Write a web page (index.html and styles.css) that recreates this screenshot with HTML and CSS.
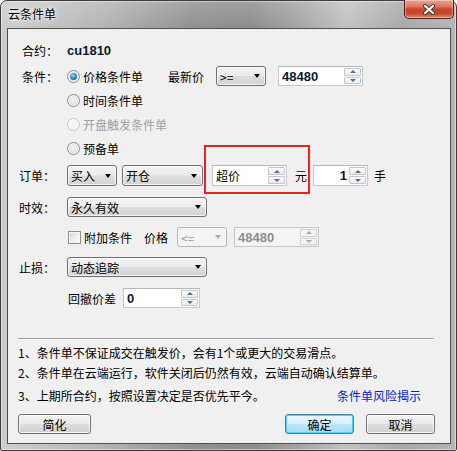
FILE: index.html
```html
<!DOCTYPE html>
<html lang="zh-CN">
<head>
<meta charset="utf-8">
<title>云条件单</title>
<link rel="stylesheet" href="styles.css">
</head>
<body>
<div class="window">
  <div class="titlebar">
    <span class="title">云条件单</span>
    <div class="close">
      <svg width="14" height="11" viewBox="0 0 14 11">
        <path d="M3 2 L11 9 M11 2 L3 9" stroke="#3b3b3b" stroke-width="4.2" stroke-linecap="round"/>
        <path d="M3 2 L11 9 M11 2 L3 9" stroke="#ffffff" stroke-width="2.2" stroke-linecap="round"/>
      </svg>
    </div>
  </div>
  <div class="client">
    <div class="row r1">
      <span class="lab lab-in">合约：</span>
      <span class="contract">cu1810</span>
    </div>
    <div class="row r2">
      <span class="lab lab-in">条件：</span>
      <span class="radio checked"><i class="rb"></i>价格条件单</span>
      <span class="latest">最新价</span>
      <div class="select w50"><span>&gt;=</span><i class="arrow"></i></div>
      <div class="spin w85 ml12"><span class="val num">48480</span><div class="btns"><b><i class="up"></i></b><b><i class="down"></i></b></div></div>
    </div>
    <div class="row r3">
      <span class="lab"></span>
      <span class="radio"><i class="rb"></i>时间条件单</span>
    </div>
    <div class="row r3">
      <span class="lab"></span>
      <span class="radio disabled"><i class="rb"></i>开盘触发条件单</span>
    </div>
    <div class="row r3">
      <span class="lab"></span>
      <span class="radio"><i class="rb"></i>预备单</span>
    </div>
    <div class="row r6">
      <span class="lab">订单：</span>
      <div class="select w50"><span>买入</span><i class="arrow"></i></div>
      <div class="select w81 ml5"><span>开仓</span><i class="arrow"></i></div>
      <div class="spin w75 ml9"><span class="val">超价</span><div class="btns"><b><i class="up"></i></b><b><i class="down"></i></b></div></div>
      <span class="unit-yuan">元</span>
      <div class="spin w55 ml6"><span class="val num right">1</span><div class="btns"><b><i class="up"></i></b><b><i class="down"></i></b></div></div>
      <span class="unit-shou">手</span>
    </div>
    <div class="row r7">
      <span class="lab">时效：</span>
      <div class="select w140"><span>永久有效</span><i class="arrow"></i></div>
    </div>
    <div class="row r8">
      <span class="lab"></span>
      <span class="check"><i class="cb"></i>附加条件</span>
      <span class="price-lab">价格</span>
      <div class="select w50 disabled"><span>&lt;=</span><i class="arrow"></i></div>
      <div class="spin w85 ml7 disabled"><span class="val num">48480</span><div class="btns"><b><i class="up"></i></b><b><i class="down"></i></b></div></div>
    </div>
    <div class="row r9">
      <span class="lab">止损：</span>
      <div class="select w140"><span>动态追踪</span><i class="arrow"></i></div>
    </div>
    <div class="row r10">
      <span class="lab"></span>
      <span class="pullback">回撤价差</span>
      <div class="spin w77 ml7"><span class="val num">0</span><div class="btns"><b><i class="up"></i></b><b><i class="down"></i></b></div></div>
    </div>
    <div class="sep"></div>
    <div class="note n1">1、条件单不保证成交在触发价，会有1个或更大的交易滑点。</div>
    <div class="note">2、条件单在云端运行，软件关闭后仍然有效，云端自动确认结算单。</div>
    <div class="note n3"><span>3、上期所合约，按照设置决定是否优先平今。</span><span class="link">条件单风险揭示</span></div>
    <div class="buttons">
      <button class="btn w73">简化</button>
      <span class="spacer"></span>
      <button class="btn default w69">确定</button>
      <button class="btn w69">取消</button>
    </div>
    <div class="highlight"></div>
  </div>
</div>
</body>
</html>
```
FILE: styles.css
```css
* { box-sizing: border-box; }
html, body { margin: 0; padding: 0; }
body {
  width: 457px;
  height: 451px;
  overflow: hidden;
  background: #ffffff;
  font-family: "Noto Sans CJK SC", "Liberation Sans", sans-serif;
  font-size: 12px;
  color: #000;
}

.window {
  width: 457px;
  height: 451px;
  border: 1px solid #3c3c3c;
  border-radius: 7px 7px 2px 2px;
  background:
    linear-gradient(180deg, rgba(255,255,255,0.18) 0px, rgba(255,255,255,0) 28px),
    linear-gradient(90deg, #cdcdcd 0%, #c4c4c4 10%, #b0b0b0 25%, #909090 42%, #8c8c8c 55%, #a6a6a6 66%, #c2c2c2 76%, #a9a9a9 88%, #b4b4b4 100%);
  box-shadow: inset 0 0 0 1px rgba(255,255,255,0.45);
  display: flex;
  flex-direction: column;
  padding: 0 5px 6px 6px;
}

.titlebar {
  height: 27px;
  display: flex;
  justify-content: space-between;
  align-items: flex-start;
}
.title {
  padding: 5px 0 0 1px;
  line-height: 16px;
  font-size: 12px;
  color: #000;
  text-shadow: 0 0 6px #ffffff, 0 0 3px #ffffff;
}
.close {
  width: 50px;
  height: 19px;
  margin: -1px -3px 0 0;
  border: 1px solid #4e1e17;
  border-top: none;
  border-radius: 0 0 5px 5px;
  background: linear-gradient(180deg, #e9a595 0%, #de7a63 35%, #c8432a 52%, #c8482d 75%, #e08a70 100%);
  box-shadow: inset 0 0 0 1px rgba(255,255,255,0.35);
  display: flex;
  align-items: center;
  justify-content: center;
}

.client {
  position: relative;
  flex: 1;
  border: 1px solid #4f4f4f;
  background: #f0f0f0;
  display: flex;
  flex-direction: column;
  padding-left: 11px;
}

.row {
  display: flex;
  align-items: center;
  height: 20px;
}
.r1 { margin-top: 11px; }
.r2 { margin-top: 6px; }
.r3 { margin-top: 4px; }
.r6 { margin-top: 7px; height: 21px; }
.r7 { margin-top: 11px; }
.r8 { margin-top: 10px; }
.r9 { margin-top: 10px; }
.r10 { margin-top: 11px; }

.lab { width: 48px; flex: none; white-space: nowrap; }
.lab-in { padding-left: 3px; }

.contract {
  font-family: "Liberation Sans", Arial, sans-serif;
  font-weight: bold;
  font-size: 13px;
  color: #0b1a33;
}

/* radio */
.radio, .check {
  display: flex;
  align-items: center;
  white-space: nowrap;
}
.rb {
  width: 13px;
  height: 13px;
  margin: 0 3px 0 0;
  border-radius: 50%;
  border: 1px solid #8a8a8a;
  background: radial-gradient(circle at 50% 45%, #f4f4f4 0%, #e2e2e2 55%, #cfcfcf 100%);
  box-shadow: inset 0 0 0 1px #f8f8f8;
  position: relative;
  flex: none;
}
.radio.checked .rb::after {
  content: "";
  position: absolute;
  left: 2px; top: 2px;
  width: 7px; height: 7px;
  border-radius: 50%;
  background: radial-gradient(circle at 40% 35%, #9fd6f5 0%, #3a8cc8 45%, #14508a 100%);
}
.radio.disabled { color: #a0a0a0; }
.radio.disabled .rb {
  border-color: #c8c8c8;
  background: #f4f4f4;
}

.latest { margin-left: 25px; margin-right: 12px; white-space: nowrap; }

/* select */
.select {
  display: flex;
  align-items: center;
  height: 20px;
  border: 1px solid #707070;
  border-radius: 3px;
  background: linear-gradient(180deg, #f3f3f3 0%, #ececec 48%, #dedede 52%, #d3d3d3 100%);
  box-shadow: inset 0 0 0 1px rgba(255,255,255,0.7);
  padding-left: 3px;
  flex: none;
  white-space: nowrap;
}
.r6 .select { height: 21px; }
.select .arrow {
  margin-left: auto;
  margin-right: 5px;
  width: 0; height: 0;
  border-left: 3.5px solid transparent;
  border-right: 3.5px solid transparent;
  border-top: 4px solid #000;
}
.select.disabled {
  border-color: #b5b8ba;
  background: #f4f4f4;
  box-shadow: none;
  color: #9a9a9a;
}
.select.disabled .arrow { border-top-color: #a8a8a8; }

.w50 { width: 50px; }
.w55 { width: 55px; }
.w69 { width: 69px; }
.w73 { width: 73px; }
.w75 { width: 75px; }
.w77 { width: 77px; }
.w81 { width: 81px; }
.w85 { width: 85px; }
.w140 { width: 140px; }
.ml5 { margin-left: 5px; }
.ml6 { margin-left: 6px; }
.ml7 { margin-left: 7px; }
.ml9 { margin-left: 9px; }
.ml12 { margin-left: 12px; }

/* spin */
.spin {
  display: flex;
  height: 20px;
  border: 1px solid #c6c9cc;
  border-top-color: #b4b7ba;
  background: #ffffff;
  flex: none;
}
.r6 .spin { height: 21px; }
.spin .val {
  flex: 1;
  padding-left: 3px;
  display: flex;
  align-items: center;
  white-space: nowrap;
}
.spin .val.num {
  font-family: "Liberation Sans", Arial, sans-serif;
  font-weight: bold;
  font-size: 13px;
  color: #0b1a33;
}
.spin .val.right { justify-content: flex-end; padding-right: 2px; }
.spin .btns {
  width: 18px;
  display: flex;
  flex-direction: column;
  gap: 1px;
  padding: 1px 1px 1px 0;
  background: #ffffff;
}
.spin .btns b {
  flex: 1;
  border: 1px solid #c3c6c9;
  border-radius: 1px;
  background: linear-gradient(180deg, #fafafa 0%, #ececec 100%);
  display: flex;
  align-items: center;
  justify-content: center;
}
.spin .up {
  width: 0; height: 0;
  border-left: 3px solid transparent;
  border-right: 3px solid transparent;
  border-bottom: 3px solid #4b6aa6;
}
.spin .down {
  width: 0; height: 0;
  border-left: 3px solid transparent;
  border-right: 3px solid transparent;
  border-top: 3px solid #4b6aa6;
}
.spin.disabled { background: #f4f4f4; border-color: #c9c9c9; }
.spin.disabled .val.num { color: #8e8e8e; }
.spin.disabled .btns { background: #f4f4f4; }
.spin.disabled .btns b { border-color: #d0d0d0; background: #f4f4f4; }
.spin.disabled .up { border-bottom-color: #a8a8a8; }
.spin.disabled .down { border-top-color: #a8a8a8; }

.unit-yuan { margin-left: 8px; }
.unit-shou { margin-left: 6px; }

/* checkbox */
.cb {
  width: 13px;
  height: 13px;
  margin: 0 3px 0 1px;
  border: 1px solid #8e8f8f;
  background: linear-gradient(135deg, #d6d6d6 0%, #f0f0f0 60%, #ffffff 100%);
  box-shadow: inset 0 0 0 1px #f4f4f4;
  flex: none;
}
.price-lab { margin-left: 12px; margin-right: 9px; white-space: nowrap; }

.pullback { margin-left: 1px; white-space: nowrap; }

.sep {
  margin: 30px 16px 0 -1px;
  height: 2px;
  border-top: 1px solid #a0a0a0;
  border-bottom: 1px solid #ffffff;
}

.note {
  margin-left: -1px;
  line-height: 20px;
  height: 20px;
  white-space: nowrap;
}
.n1 { margin-top: 3px; }
.n3 { margin-top: 3px; display: flex; justify-content: space-between; margin-right: 29px; }
.link { color: #0026cc; }

.buttons {
  display: flex;
  margin: 8px 15px 0 -1px;
  gap: 12px;
}
.spacer { flex: 1; }
.btn {
  height: 20px;
  padding: 0;
  font-family: "Noto Sans CJK SC", "Liberation Sans", sans-serif;
  font-size: 12px;
  color: #000;
  border: 1px solid #707070;
  border-radius: 3px;
  background: linear-gradient(180deg, #f2f2f2 0%, #ebebeb 48%, #dddddd 52%, #cfcfcf 100%);
  box-shadow: inset 0 0 0 1px rgba(255,255,255,0.75);
}
.btn.default {
  border-color: #3c7fb1;
  background: linear-gradient(180deg, #eaf6fd 0%, #d9f0fc 48%, #bee6fd 52%, #a7d9f5 100%);
  box-shadow: inset 0 0 0 1px #48d4f6;
}

.highlight {
  position: absolute;
  left: 196px;
  top: 116px;
  width: 106px;
  height: 49px;
  border: 2px solid #e8242a;
  pointer-events: none;
}
```
